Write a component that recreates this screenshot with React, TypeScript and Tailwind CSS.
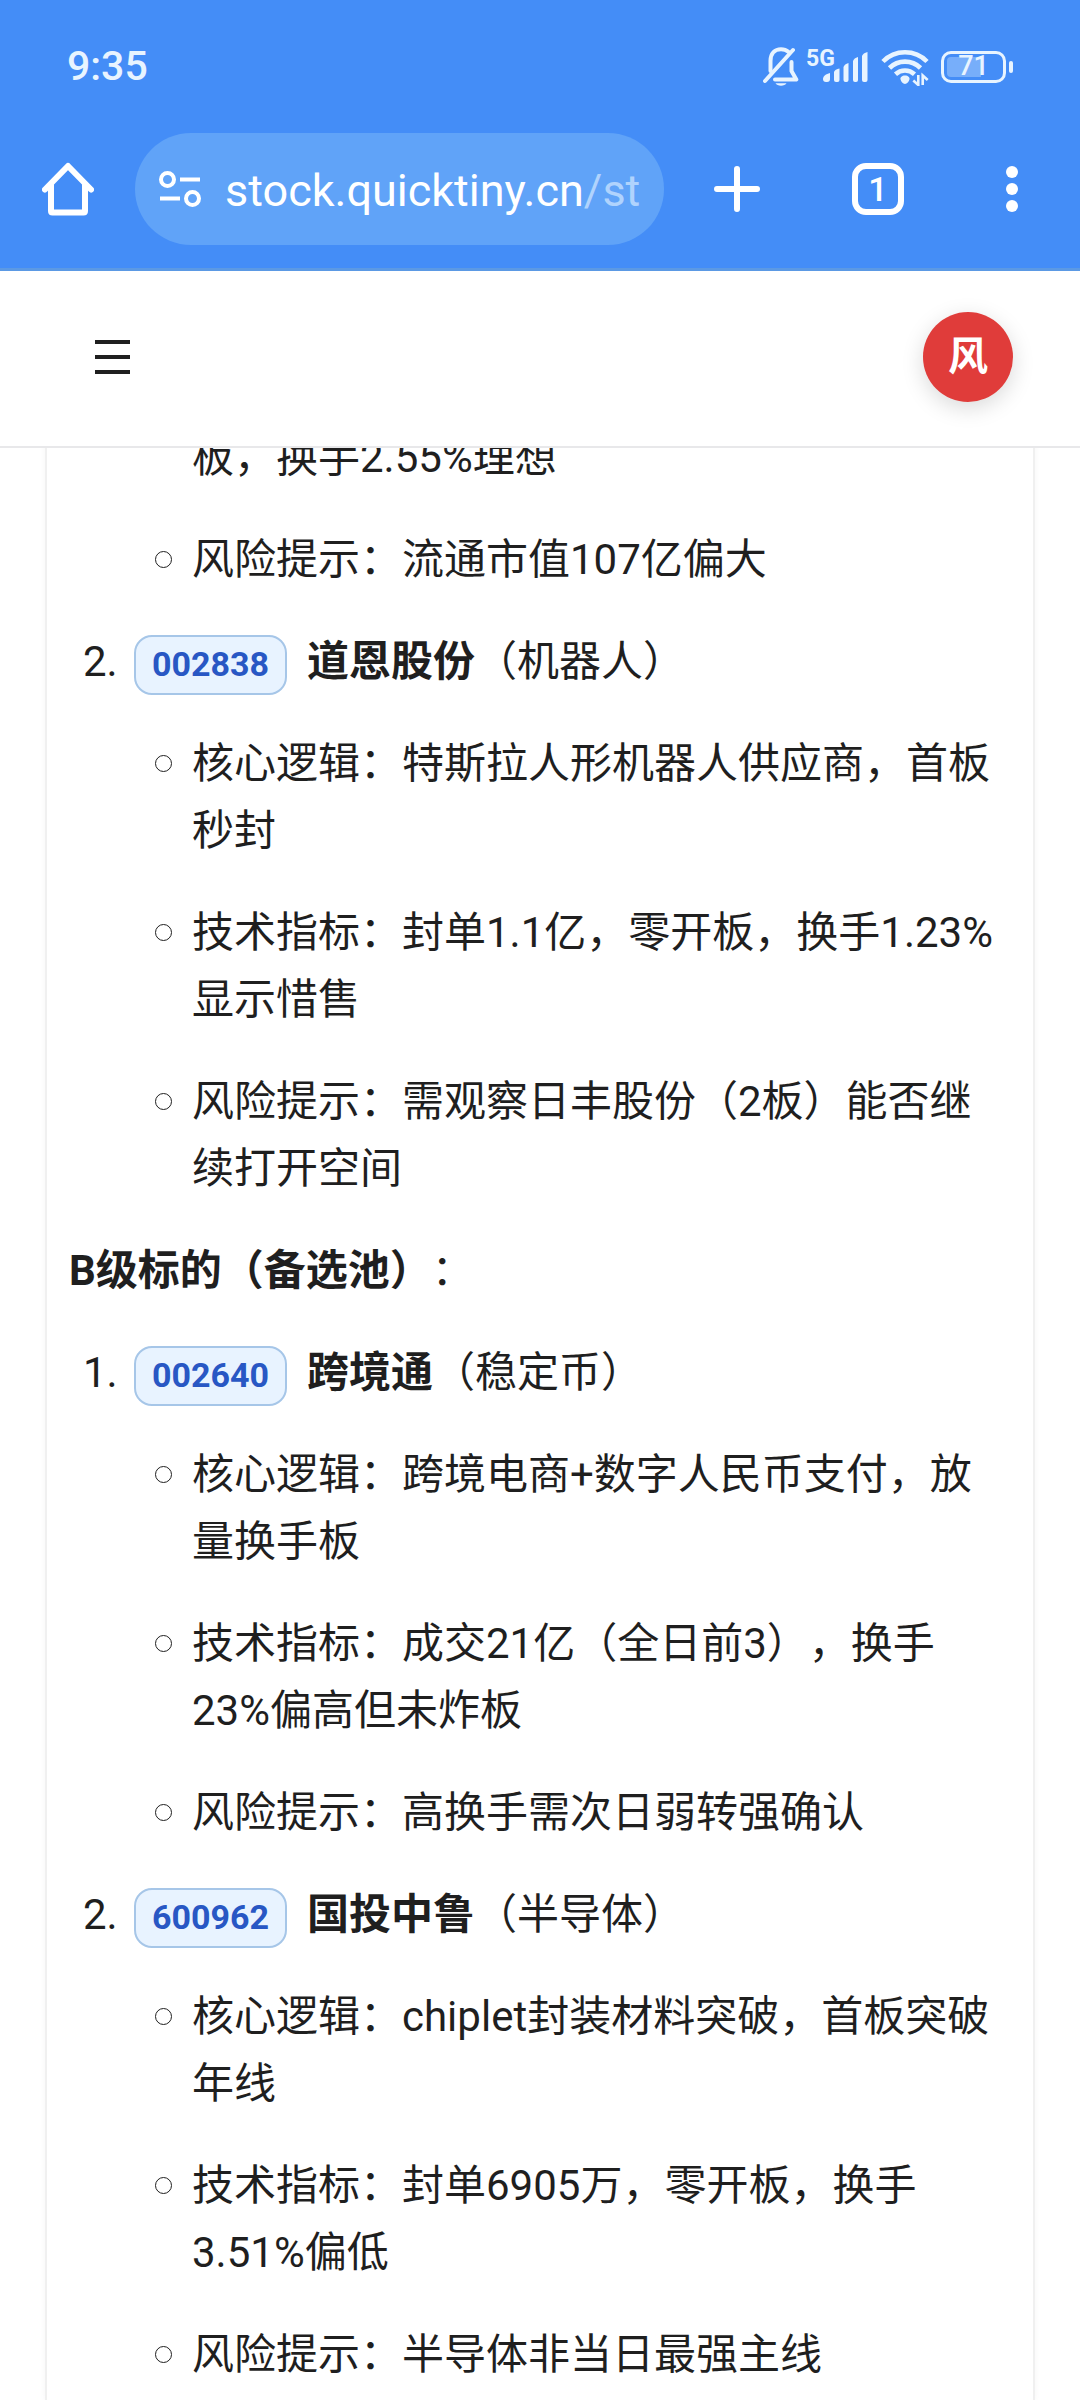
type Stock = {
  code: string;
  name: string;
  theme: string;
  points: string[];
};

const gradeA: Stock[] = [
  {
    code: "002838",
    name: "道恩股份",
    theme: "（机器人）",
    points: [
      "核心逻辑：特斯拉人形机器人供应商，首板秒封",
      "技术指标：封单1.1亿，零开板，换手1.23%显示惜售",
      "风险提示：需观察日丰股份（2板）能否继续打开空间",
    ],
  },
];

const gradeB: Stock[] = [
  {
    code: "002640",
    name: "跨境通",
    theme: "（稳定币）",
    points: [
      "核心逻辑：跨境电商+数字人民币支付，放量换手板",
      "技术指标：成交21亿（全日前3），换手23%偏高但未炸板",
      "风险提示：高换手需次日弱转强确认",
    ],
  },
  {
    code: "600962",
    name: "国投中鲁",
    theme: "（半导体）",
    points: [
      "核心逻辑：chiplet封装材料突破，首板突破年线",
      "技术指标：封单6905万，零开板，换手3.51%偏低",
      "风险提示：半导体非当日最强主线",
    ],
  },
];

const StatusBar = () => (
  <div className="flex h-[133px] items-center justify-between px-[67px] text-[#e8f4ff]">
    <span className="text-[41px] font-medium">9:35</span>
    <div className="flex items-center">
      <svg width="36" height="40" viewBox="0 0 36 40" fill="none" stroke="currentColor" strokeWidth="4" strokeLinecap="round" strokeLinejoin="round">
        <path d="M2 34L30 3" />
        <path d="M7.5 24V14C7.5 6 12 2.200 18 2.200c3 0 5.500 1 7.300 2.600" />
        <path d="M28.500 15v9l4.800 8.500H12" />
        <path d="M12.500 36.300h11c-1.500 3.200-9.500 3.200-11 0z" fill="currentColor" stroke="none" />
      </svg>
      <svg className="ml-2" width="62" height="40" viewBox="0 0 62 40" fill="currentColor">
        <text x="-1" y="19" fontSize="23" fontWeight="700">5G</text>
        <path d="M16 32c0-3 3-5 7-6v6q0 3-3 3h-1q-3 0-3-3z" />
        <path d="M27 25q1-3 5.500-3.500V33q0 2-2 2H29q-2 0-2-2z" />
        <path d="M36.500 20q1-3 5-4V33q0 2-2 2h-1q-2 0-2-2z" />
        <path d="M46 14q1-3 5-4V33q0 2-2 2h-1q-2 0-2-2z" />
        <path d="M55 9q1-3 5.500-4V33q0 2-2 2H57q-2 0-2-2z" />
      </svg>
      <svg className="ml-3" width="48" height="38" viewBox="0 0 48 38" fill="none" stroke="currentColor" strokeWidth="4.600">
        <path d="M2 13.500C14 1.200 34 1.200 46 13.500" />
        <path d="M8.500 20C17 11.500 31 11.500 39.500 20" />
        <path d="M14.500 26.300c5.500-5 13.500-5 19 0" />
        <path d="M24 27.500c3 0 5 2 4.500 3.800C28 33.500 26 36 24 36s-4-2.500-4.500-4.700c-.5-1.800 1.500-3.800 4.500-3.800z" fill="currentColor" stroke="none" />
        <path d="M37.300 27v10l-5-4.500M41.700 37V27.500l5 4.500" strokeWidth="2.600" />
      </svg>
      <div className="ml-3 flex items-center gap-[3px]">
        <div className="flex h-8 w-[65px] rounded-[10px] border-3 border-current p-[3px]">
          <div className="flex w-full items-center justify-center rounded-sm bg-linear-to-r from-[#77aefa] from-65% to-transparent to-65% text-[27px] leading-none font-medium">71</div>
        </div>
        <div className="h-3 w-1 rounded-full bg-current" />
      </div>
    </div>
  </div>
);

const Toolbar = () => (
  <div className="flex items-center border-b-3 border-[#5b99e4] pr-[62px] pb-[23px] pl-[42px] text-white">
    <button type="button" aria-label="主页" className="shrink-0">
      <svg width="52" height="54" viewBox="0 0 52 54" fill="none" stroke="currentColor" strokeWidth="6" strokeLinecap="round" strokeLinejoin="round">
        <path d="M3 27.500L26 4l23 23.500" />
        <path d="M9 23v26q0 1.500 1.500 1.500h31q1.500 0 1.500-1.500V23" />
      </svg>
    </button>
    <button type="button" className="ml-[41px] flex h-28 min-w-0 flex-1 items-center gap-6 rounded-full bg-[#60a3f8] pr-[23px] pl-6">
      <svg className="shrink-0" width="42" height="38" viewBox="0 0 42 38" fill="none" stroke="currentColor" strokeWidth="4">
        <circle cx="8.500" cy="9.500" r="6.500" />
        <path d="M21 9.500h20M1 28.500h20" />
        <circle cx="33.500" cy="28.500" r="6.500" />
      </svg>
      <span className="flex-1 overflow-hidden pt-1 text-left text-[45px] whitespace-nowrap">
        stock.quicktiny.cn<span className="text-[#b0d3fd]">/str</span>
      </span>
    </button>
    <button type="button" aria-label="新标签页" className="ml-[50px] shrink-0">
      <svg width="46" height="48" viewBox="0 0 46 48" fill="none" stroke="currentColor" strokeWidth="6" strokeLinecap="round">
        <path d="M23 4v40M3 24h40" />
      </svg>
    </button>
    <button type="button" aria-label="标签页" className="ml-[92px] flex size-[52px] shrink-0 items-center justify-center rounded-[14px] border-6 border-white text-[34px] leading-none font-medium">
      1
    </button>
    <button type="button" aria-label="更多" className="ml-[102px] flex shrink-0 flex-col gap-[5px]">
      <span className="size-3 rounded-full bg-white" />
      <span className="size-3 rounded-full bg-white" />
      <span className="size-3 rounded-full bg-white" />
    </button>
  </div>
);

const Point = ({ text }: { text: string }) => (
  <li className="flex before:mt-[25px] before:mr-5 before:ml-[27px] before:size-[17px] before:shrink-0 before:rounded-full before:border before:border-[#1f1f1f] before:content-['']">
    <span>{text}</span>
  </li>
);

const StockList = ({ stocks, start = 1 }: { stocks: Stock[]; start?: number }) => (
  <ol start={start} className="flex list-decimal flex-col gap-[35px] pl-[59px]">
    {stocks.map((stock) => (
      <li key={stock.code}>
        <div className="flex h-[67px] items-baseline">
          <a href={`#${stock.code}`} className="mr-5 ml-[6px] rounded-[18px] border-2 border-[#a6c6e8] bg-[#e8f3ff] px-4 pb-[2px] text-[34px] leading-[54px] font-bold text-[#2857c4]">
            {stock.code}
          </a>
          <strong>{stock.name}</strong>
          {stock.theme}
        </div>
        <ul className="mt-[35px] flex flex-col gap-[35px]">
          {stock.points.map((text) => (
            <Point key={text} text={text} />
          ))}
        </ul>
      </li>
    ))}
  </ol>
);

const App = () => {
  return (
    <div className="flex min-h-screen flex-col bg-white font-[Roboto,'Noto_Sans_CJK_SC',sans-serif] text-[#1f1f1f] [text-spacing-trim:space-all]" lang="zh-CN">
      <div className="bg-[#448df7]">
        <StatusBar />
        <Toolbar />
      </div>
      <header className="flex h-[177px] shrink-0 items-center justify-between border-b-2 border-[#e8e8ea] pr-[67px] pb-1 pl-[95px]">
        <button type="button" aria-label="菜单" className="flex flex-col gap-[11px]">
          <span className="h-[4px] w-[35px] bg-[#1f1f1f]" />
          <span className="h-[4px] w-[35px] bg-[#1f1f1f]" />
          <span className="h-[4px] w-[35px] bg-[#1f1f1f]" />
        </button>
        <button type="button" className="size-[90px] rounded-full bg-[#e03c3a] text-[40px] font-bold text-white shadow-[0_6px_22px_rgba(0,0,0,0.15)]">
          风
        </button>
      </header>
      <main className="flex flex-1 overflow-hidden px-[45px]">
        {/* the article is scrolled part of a line under the header */}
        <article className="-mt-6 flex flex-1 flex-col gap-[35px] border-x-2 border-[#f0f0f0] px-[22px] text-[42px] leading-[67px] shadow-[0_0_6px_rgba(0,0,0,0.04)]">
          <ul className="flex flex-col gap-[35px] pl-[59px]">
            <li className="pl-16">板，换手2.55%理想</li>
            <Point text="风险提示：流通市值107亿偏大" />
          </ul>
          <StockList stocks={gradeA} start={2} />
          <p>
            <strong>B级标的（备选池）</strong>：
          </p>
          <StockList stocks={gradeB} />
        </article>
      </main>
    </div>
  );
};

export default App;
